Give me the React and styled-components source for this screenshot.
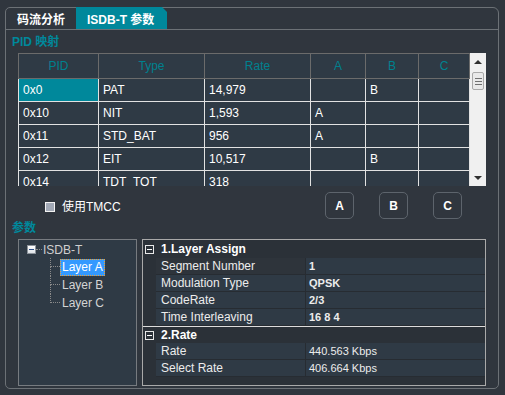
import React from "react";
import styled, { createGlobalStyle } from "styled-components";

const Global = createGlobalStyle`
  html, body { margin: 0; padding: 0; background: #30363e; }
  body { font-family: "Liberation Sans", "Noto Sans CJK SC", sans-serif; }
  * { box-sizing: border-box; }
`;

const TEAL = "#00889b";
const LINE = "#6c7176";

const Page = styled.div`
  width: 505px;
  height: 395px;
  padding: 7px 6px 0 5px;
  background: #30363e;
  overflow: hidden;
`;

const Frame = styled.div`
  height: 382px;
  border: 1px solid ${LINE};
  border-radius: 5px 6px 5px 5px;
  display: flex;
  flex-direction: column;
`;

const TabBar = styled.div`
  height: 22px;
  border-bottom: 1px solid ${LINE};
  display: flex;
`;

const Tab = styled.div`
  width: ${(p) => p.$w}px;
  height: ${(p) => (p.$active ? 22 : 21)}px;
  margin-top: ${(p) => (p.$active ? -1 : 0)}px;
  padding-left: 11px;
  display: flex;
  align-items: center;
  color: #ffffff;
  font-weight: bold;
  font-size: 12px;
  background: ${(p) => (p.$active ? TEAL : "transparent")};
  clip-path: ${(p) =>
    p.$active
      ? "polygon(0 0, calc(100% - 5px) 0, 100% 5px, 100% 100%, 0 100%)"
      : "none"};
`;

const Content = styled.div`
  display: flex;
  flex-direction: column;
  padding: 0 12px;
`;

const SectionLabel = styled.div`
  margin-left: -6px;
  height: ${(p) => p.$h}px;
  padding-top: ${(p) => p.$pt}px;
  line-height: 14px;
  font-size: 12px;
  font-weight: bold;
  color: ${TEAL};
`;

const TableArea = styled.div`
  display: flex;
  width: 468px;
  height: 133px;
  overflow: hidden;
`;

const Table = styled.table`
  width: 451px;
  table-layout: fixed;
  border-collapse: collapse;
  align-self: flex-start;
  font-size: 12px;
`;

const Th = styled.th`
  height: 25px;
  padding: 0;
  font-weight: normal;
  color: #00818f;
  background: #2f3a45;
  border: 1px solid #6b6b6b;
  text-align: center;
`;

const Td = styled.td`
  height: 23px;
  padding: 0 0 0 4px;
  color: #ffffff;
  background: ${(p) => (p.$sel ? TEAL : "#2f3a45")};
  border: 1px solid #e2e2e2;
  white-space: nowrap;
  overflow: hidden;
`;

const Scrollbar = styled.div`
  width: 17px;
  height: 133px;
  background: #f0f0f0;
  display: flex;
  flex-direction: column;
`;

const ScrollBtn = styled.div`
  height: 17px;
  display: flex;
  align-items: center;
  justify-content: center;
`;

const Arrow = styled.div`
  width: 0;
  height: 0;
  border-left: 4px solid transparent;
  border-right: 4px solid transparent;
  border-bottom: ${(p) => (p.$up ? "4px solid #303030" : "none")};
  border-top: ${(p) => (p.$up ? "none" : "4px solid #303030")};
`;

const Track = styled.div`
  flex: 1;
  padding: 2px 2px 0 2px;
`;

const Thumb = styled.div`
  height: 18px;
  border: 1px solid #a9a9a9;
  border-radius: 2px;
  background: #e9e9e9;
  display: flex;
  flex-direction: column;
  align-items: center;
  justify-content: center;
  gap: 2px;
`;

const Grip = styled.div`
  width: 7px;
  height: 1px;
  background: #707070;
`;

const ControlsRow = styled.div`
  height: 35px;
  display: flex;
  align-items: flex-start;
`;

const CheckGroup = styled.div`
  margin: 16px 0 0 27px;
  display: flex;
  align-items: center;
  gap: 7px;
`;

const CheckBox = styled.div`
  width: 10px;
  height: 10px;
  border: 1px solid #f2f2f2;
  background: #a2a9b6;
`;

const CheckText = styled.span`
  color: #ffffff;
  font-size: 12px;
  line-height: 10px;
`;

const ButtonGroup = styled.div`
  margin: 6px 24px 0 auto;
  display: flex;
  gap: 25px;
`;

const LayerButton = styled.div`
  width: 29px;
  height: 27px;
  border: 1px solid #5d646c;
  border-radius: 5px;
  display: flex;
  align-items: center;
  justify-content: center;
  color: #ffffff;
  font-weight: bold;
  font-size: 12px;
`;

const BottomRow = styled.div`
  display: flex;
  gap: 5px;
  height: 147px;
`;

const TreeBox = styled.div`
  width: 119px;
  border: 1px solid #777b80;
  background: #2f3a45;
  padding: 1px 0 0 8px;
  font-size: 12px;
`;

const TreeRootRow = styled.div`
  height: 17px;
  display: flex;
  align-items: center;
`;

const ExpandBox = styled.div`
  width: 9px;
  height: 9px;
  border: 1px solid #8d949c;
  background: linear-gradient(#ffffff, #dfe3e8);
  display: flex;
  align-items: center;
  justify-content: center;
`;

const ExpandMinus = styled.div`
  width: 5px;
  height: 1px;
  background: #2a4f8a;
`;

const HDots = styled.div`
  width: ${(p) => p.$w}px;
  border-top: 1px dotted #8a8a8a;
  margin-right: 1px;
`;

const RootLabel = styled.span`
  color: #cfcfcf;
`;

const ChildList = styled.div`
  margin-left: 23px;
  display: flex;
  flex-direction: column;
`;

const ChildRow = styled.div`
  height: 18px;
  display: flex;
  align-items: stretch;
`;

const Connector = styled.div`
  width: 10px;
  display: flex;
  flex-direction: column;
`;

const ConnTop = styled.div`
  height: 9px;
  border-left: 1px dotted #8a8a8a;
  border-bottom: 1px dotted #8a8a8a;
`;

const ConnBottom = styled.div`
  flex: 1;
  border-left: 1px dotted ${(p) => (p.$last ? "transparent" : "#8a8a8a")};
`;

const NodeLabel = styled.div`
  align-self: center;
  height: 17px;
  line-height: 15px;
  padding: 0 1px;
  border: 1px dotted ${(p) => (p.$active ? "#f3a12f" : "transparent")};
  background: ${(p) => (p.$active ? "#3399ff" : "transparent")};
  color: ${(p) => (p.$active ? "#ffffff" : "#d4d4d4")};
`;

const PropGrid = styled.div`
  width: 344px;
  border: 1px solid #a9a9a9;
  background: #2b3138;
  display: flex;
  flex-direction: column;
  font-size: 12px;
`;

const CategoryRow = styled.div`
  height: ${(p) => p.$h}px;
  display: flex;
  align-items: center;
  color: #ffffff;
  font-weight: bold;
  border-top: ${(p) => (p.$divider ? "1px solid #dcdcdc" : "none")};
`;

const CatIcon = styled.div`
  width: 9px;
  height: 9px;
  margin: 0 7px 0 2px;
  border: 1px solid #e8e8e8;
  display: flex;
  align-items: center;
  justify-content: center;
`;

const CatMinus = styled.div`
  width: 5px;
  height: 1px;
  background: #ffffff;
`;

const PropRow = styled.div`
  height: 17px;
  display: flex;
`;

const Gutter = styled.div`
  width: 13px;
`;

const LabelCell = styled.div`
  width: 150px;
  padding-left: 5px;
  display: flex;
  align-items: center;
  color: #ececec;
  background: ${(p) => (p.$dim ? "#2e343b" : "#2f3a45")};
  border-right: 1px solid #272c32;
  border-bottom: 1px solid #272c32;
`;

const ValueCell = styled.div`
  flex: 1;
  padding-left: 3px;
  display: flex;
  align-items: center;
  color: #ececec;
  font-size: 11px;
  font-weight: ${(p) => (p.$bold ? "bold" : "normal")};
  background: #2f3a45;
  border-bottom: 1px solid #272c32;
`;

const columns = [
  { name: "PID", w: 80 },
  { name: "Type", w: 106 },
  { name: "Rate", w: 106 },
  { name: "A", w: 55 },
  { name: "B", w: 53 },
  { name: "C", w: 51 },
];

const rows = [
  ["0x0", "PAT", "14,979", "", "B", ""],
  ["0x10", "NIT", "1,593", "A", "", ""],
  ["0x11", "STD_BAT", "956", "A", "", ""],
  ["0x12", "EIT", "10,517", "", "B", ""],
  ["0x14", "TDT_TOT", "318", "", "", ""],
];

const props1 = [
  ["Segment Number", "1"],
  ["Modulation Type", "QPSK"],
  ["CodeRate", "2/3"],
  ["Time Interleaving", "16 8 4"],
];

const props2 = [
  ["Rate", "440.563 Kbps"],
  ["Select Rate", "406.664 Kbps"],
];

export default function App() {
  return (
    <Page>
      <Global />
      <Frame>
        <TabBar>
          <Tab $w={70}>码流分析</Tab>
          <Tab $w={91} $active>
            ISDB-T 参数
          </Tab>
        </TabBar>
        <Content>
          <SectionLabel $h={23} $pt={5}>
            PID 映射
          </SectionLabel>
          <TableArea>
            <Table>
              <colgroup>
                {columns.map((c) => (
                  <col key={c.name} style={{ width: c.w }} />
                ))}
              </colgroup>
              <thead>
                <tr>
                  {columns.map((c) => (
                    <Th key={c.name}>{c.name}</Th>
                  ))}
                </tr>
              </thead>
              <tbody>
                {rows.map((r, i) => (
                  <tr key={i}>
                    {r.map((v, j) => (
                      <Td key={j} $sel={i === 0 && j === 0}>
                        {v}
                      </Td>
                    ))}
                  </tr>
                ))}
              </tbody>
            </Table>
            <Scrollbar>
              <ScrollBtn>
                <Arrow $up />
              </ScrollBtn>
              <Track>
                <Thumb>
                  <Grip />
                  <Grip />
                  <Grip />
                </Thumb>
              </Track>
              <ScrollBtn>
                <Arrow />
              </ScrollBtn>
            </Scrollbar>
          </TableArea>
          <ControlsRow>
            <CheckGroup>
              <CheckBox />
              <CheckText>使用TMCC</CheckText>
            </CheckGroup>
            <ButtonGroup>
              <LayerButton>A</LayerButton>
              <LayerButton>B</LayerButton>
              <LayerButton>C</LayerButton>
            </ButtonGroup>
          </ControlsRow>
          <SectionLabel $h={18} $pt={0}>
            参数
          </SectionLabel>
          <BottomRow>
            <TreeBox>
              <TreeRootRow>
                <ExpandBox>
                  <ExpandMinus />
                </ExpandBox>
                <HDots $w={6} />
                <RootLabel>ISDB-T</RootLabel>
              </TreeRootRow>
              <ChildList>
                {["Layer A", "Layer B", "Layer C"].map((l, i) => (
                  <ChildRow key={l}>
                    <Connector>
                      <ConnTop />
                      <ConnBottom $last={i === 2} />
                    </Connector>
                    <NodeLabel $active={i === 0}>{l}</NodeLabel>
                  </ChildRow>
                ))}
              </ChildList>
            </TreeBox>
            <PropGrid>
              <CategoryRow $h={18}>
                <CatIcon>
                  <CatMinus />
                </CatIcon>
                1.Layer Assign
              </CategoryRow>
              {props1.map(([k, v], i) => (
                <PropRow key={k}>
                  <Gutter />
                  <LabelCell $dim={i === 0}>{k}</LabelCell>
                  <ValueCell $bold>{v}</ValueCell>
                </PropRow>
              ))}
              <CategoryRow $h={17} $divider>
                <CatIcon>
                  <CatMinus />
                </CatIcon>
                2.Rate
              </CategoryRow>
              {props2.map(([k, v]) => (
                <PropRow key={k}>
                  <Gutter />
                  <LabelCell>{k}</LabelCell>
                  <ValueCell>{v}</ValueCell>
                </PropRow>
              ))}
            </PropGrid>
          </BottomRow>
        </Content>
      </Frame>
    </Page>
  );
}
